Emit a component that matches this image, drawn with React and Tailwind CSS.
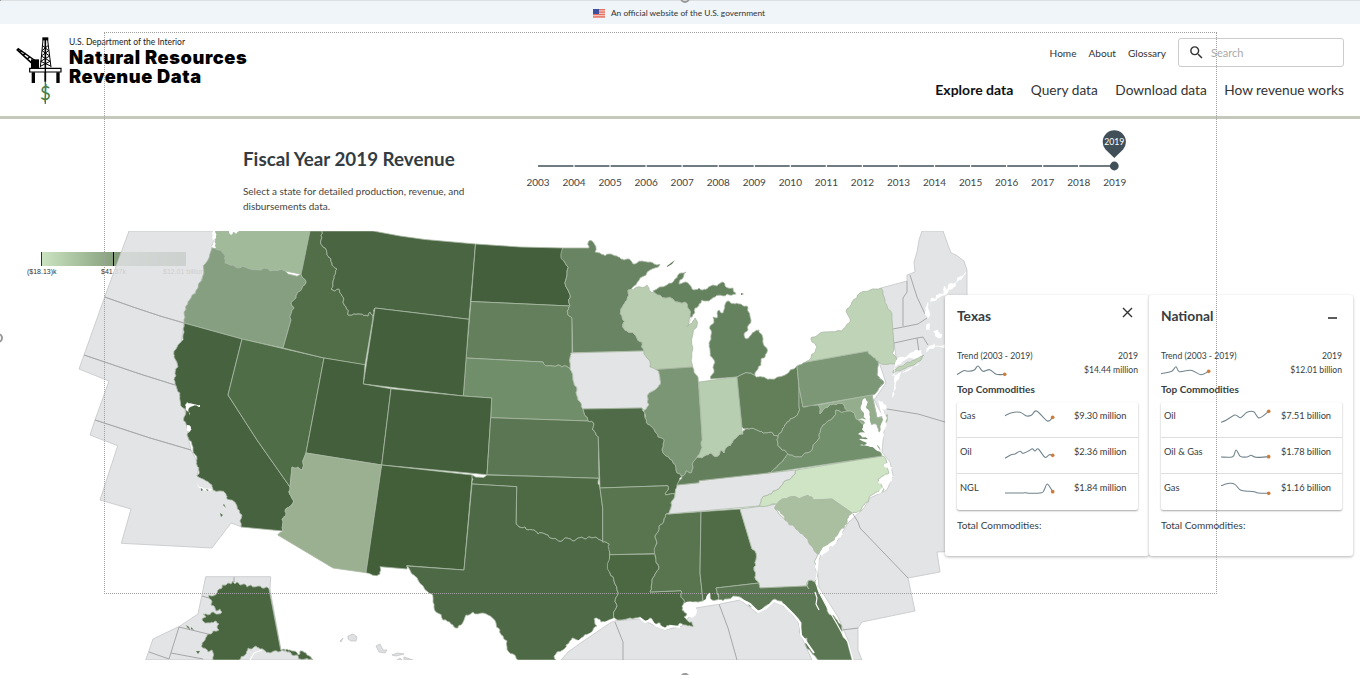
import React from 'react';
import { MdSearch } from 'react-icons/md';

const states = [
  ['#a1ba9a', 'WA', '214,231 310,231 302,270 305,275 285,271 270,271 264,268 250,269 243,266 237,268 233,265 225,263 224,254 219,250 212,248 213,244 216,240 213,237'],
  ['#859f80', 'OR', '212,248 219,250 224,254 225,263 233,265 237,268 243,266 250,269 264,268 270,271 285,271 301,274 306,281 302,288 297,293 296,298 291,303 292,306 294,308 291,320 283,348 242,339 184,323 185,318 184,312 186,306 191,298 198,288 204,273 208,260'],
  ['#47623f', 'CA', '184,323 242,339 228,395 257,440 290,487 291,496 293,503 287,508 286,515 282,519 283,531 241,527 242,515 237,506 232,500 227,499 226,494 213,490 212,485 206,481 197,476 199,471 197,465 197,459 193,450 189,440 187,434 189,430 186,424 184,417 185,409 180,400 180,393 175,384 176,376 178,367 174,357 174,351 180,343 183,335'],
  ['#4f6e47', 'NV', '242,339 324,358 306,453 302,470 298,467 292,467 290,487 257,440 228,395'],
  ['#526e48', 'ID', '310,231 322,231 321,240 323,247 327,255 331,259 332,263 337,269 334,276 333,282 331,289 335,291 339,289 342,296 343,303 346,307 348,315 352,315 360,314 368,316 370,312 373,318 365,365 324,358 283,348 291,320 294,308 292,306 291,303 296,298 297,293 302,288 306,281 301,274 302,270'],
  ['#4a6541', 'MT', '322,231 373,231 400,236 425,239.5 475.5,244 469,319.3 375,308 373,318 370,312 368,316 360,314 352,315 348,315 346,307 343,303 342,296 339,289 335,291 331,289 333,282 334,276 337,269 332,263 331,259 327,255 323,247 321,240'],
  ['#435f3b', 'ND', '475.5,244 520,247 563,248 564,261 567,275 568,290 570,298 570,306 471,301.5'],
  ['#637f5b', 'SD', '471,301.5 570,306 567,311 569,316 572,318 572,353 570,358 570,369 566,366 558,365 547,366 543,362 466,358'],
  ['#718e6b', 'NE', '466,358 543,362 547,366 558,365 566,366 570,369 573,380 577,390 578,400 583,409 588,421 490.7,417.7 491.7,398 463.3,396'],
  ['#435f3b', 'WY', '375,308 469,319.3 463.3,396 363.3,384'],
  ['#435f3b', 'UT', '324,358 365,364.7 363.3,384 391,388.7 381.7,465 306,453'],
  ['#435f3b', 'CO', '391,388.7 463.3,396 491.7,398 490.7,417.7 487,474.7 381.7,465'],
  ['#9ab091', 'AZ', '306,453 381.7,465 366,572.7 333,568 277.7,535 283,531 282,519 286,515 287,508 293,503 291,496 290,487 292,467 298,467 302,470'],
  ['#425f3a', 'NM', '381.7,465 472.3,475 464,570 406.7,565.7 407,569 380,566.7 380,574 366,572.7'],
  ['#5b7652', 'KS', '490.7,417.7 588,421 594,424 592,429 596,435 598.3,437 599,478.3 487,474.7'],
  ['#4e6a45', 'OK', '472.3,475 487,475 599,478.3 600,488 602.7,508 602.7,542 597,538 590,537 585,539 578,538 573,541 567,538 562,541 556,539 550,538 545,534 538,534 534,530 528,530 525,527 519,527 516,524 516.7,486.7 472,484'],
  ['#4d6945', 'TX', '472,484 516.7,486.7 516,524 519,527 525,527 528,530 534,530 538,534 545,534 550,538 556,539 562,541 567,538 573,541 578,538 585,539 590,537 597,538 602.7,542 609.3,544 610,573 614,581 618.3,593 615,602 616.7,607 614,618 605,622 601,622 597,618 594,619 597,626 592,632 583,637 579,641 575,639 572,638 569,643 566,645 563,650 557,652 554,656 556,660 518,660 513,654 507,647 503,636 500,630 496,623 488,615 478,614 473,612 466,615 462,624 458,628 451,624 443,620 436,612 434,607 433,597 428,592 418,580 412,574 407,566 464,570'],
  ['#698462', 'MN', '562.7,248 589,248 589,240.7 593,242 595,252 600,253 605,256 609,254 613,255 617,256 621,259 624,260 627,259 633,264 637,263 642,261 650,262 654,264 660,264.5 650,270 640,278 634,286 628,290 627,300 624,304 620.7,310 622,316 622.7,327 628,332 636,336 642,342 644,351 572.7,352.7 572,318 569,316 567,311 570,306 570,298 568,290 567,275 564,261'],
  ['#b9ceb1', 'WI', '628,290 637,287 647,285 650,291 656,292 660,295 673,299 685,302 688,308 690,317 687,327 693,321 695,318 692.7,335 691.7,353 692.7,367 656,369.5 650,367 646,357 644,351 642,342 636,336 628,332 622.7,327 622,316 620.7,310 624,304 627,300'],
  ['#65825f', 'MI-upper', '653,291 667,285 675,279 678,275 682,273 686,272 680,280 679,284 688,283 692,289 699,288 703,290 708,288 713,285 717,286 723,282 725,286 733,288 736,294 727,294 723,296 715,297 709,301 702,300 699,304 695,308 692,317 690,317 688,308 685,302 673,299 660,295'],
  ['#65825f', 'MI-lower', '725.7,303 729,301 735,304 741,304 748,307 751,320 748,330 744,335 746,339 750,336 754,332 759,330 762,335 766.7,348 765,357 762,358 761,365 758,369 755,375.7 737,377 710.7,379 714,370 714,360 710,350 709,343 711,335 710,326 714,322 713,317 717,318 719,310 723,313'],
  ['#7b9674', 'IL', '656,369.5 692.7,367 698,377 702.3,440 701,450 697,457 693,467 691,473 686,471 682,476 677,473 673,463 666,456 663,453 663,447 664,440 658,437 656,433 650,425 645,418 644,410 649,405 649,393 658,387 660,380'],
  ['#e3e4e6', 'IA', '570.7,353 644,351 646,357 650,367 656,369.5 660,380 658,387 649,393 649,405 644,410 642,408 583,409 578,400 577,390 573,380 570,369 570,358'],
  ['#506b47', 'MO', '583,409 642,408 645,418 650,425 656,433 658,437 664,440 663,447 663,453 666,456 673,463 677,473 682,476 678,487 675,494 665.7,495 668,490 667.7,485.7 600,488 598.3,437 596,435 592,429 594,424 588,421'],
  ['#59754f', 'AR', '600,488 667.7,485.7 668,490 665.7,495 675,494 671,503 671,508 666,514 664,520 659,526 658,532 655,537 656,545 655.7,553.7 609.7,554.7 609.3,544 602.7,542 602.7,508'],
  ['#4b6842', 'LA', '609.7,554.7 655.7,554 656,562 659,567 655,574 652,580 650,592 681,590.7 681,597 684,603 682,610 687,614 684,617 692,622 693,627 688,626 680,623 678,626 670,625 665,628 660,623 653,623 650,618 645,621 640,617 630,618 614,618 616.7,607 615,602 618.3,593 614,581 610,573'],
  ['#597550', 'MS', '668,514 701,511.7 700,573 703,601 693,602 684,603 681,597 681,590.7 650,592 652,580 655,574 659,567 656,562 656,545 655,537 658,532 659,526 664,520 666,514'],
  ['#506c47', 'AL', '701,511.7 740,509 752,549 756,560 754,570 756,580 759,583 716,588 717,593 719,598 712,600 710,593 708,594 708,601 703,601 700,573'],
  ['#e3e4e6', 'GA', '740,509 777,504 775,509 785,520 795,527 800,533 808,539 812,546 818,554 816,570 815,582 807,582 807,586 760,588 759,583 756,580 754,570 756,560 752,549'],
  ['#cee4c5', 'NC', '759,506 761,500 768,495 773,491 780,487 783,483 790,479 795,474 796,470 882,456 887,463 883,466 888,467 889,473 883,476 878,479 880,483 884,489 877,492 870,496 864,505 861,511 852,513 832,499 813,500 808,495.5 790,497 777,504'],
  ['#aabf9f', 'SC', '777,504 790,497 808,495.5 813,500 832,499 852,513 847,519 844,528 838,534 833,542 824,547 820,554 818,554 812,546 808,539 800,533 795,527 785,520 783,515 775,509'],
  ['#e3e4e6', 'TN', '677,485 699,482.7 699,480.7 768,473 796,470 795,474 790,479 783,483 780,487 773,491 768,495 761,500 759,506 668,514 671,508 671,503 675,494'],
  ['#647f5c', 'KY', '677,485 682,476 686,471 691,473 693,467 697,457 703,457 710,453 718,456 721,450 724,453 728,446 732,443 737,437 743,434 743,431 749,429 757,430 763,433 771,432 778,436 778,443 782,450 788,454 783,461 777,467 768,473 699,480.7 699,482.7'],
  ['#b8ceb0', 'IN', '699,382 737,377 742,430 743,434 737,437 732,443 728,446 724,453 721,450 718,456 710,453 703,457 697,457 701,450 702.3,440'],
  ['#627f5a', 'OH', '737,377 755,375.7 762,377 770,379 785,375 797,366 799,387 799,407 795,417 787,422 783,428 778,436 771,432 763,433 757,430 749,429 742,427'],
  ['#67835f', 'WV', '799,387 803,407 818,405 820,414 828,407 833,404 839,403 845,406 848,411 836,410 833,418 828,421 822,427 819,434 817,441 812,450 803,455 796,457 788,454 782,450 778,443 778,436 783,428 787,422 795,417 799,407'],
  ['#72906c', 'VA', '777,467 783,461 788,454 796,457 803,455 812,450 817,441 819,434 822,427 828,421 833,418 836,410 848,411 855,415 860,421 868,426 870,432 873,438 879,447 882,456 768,473'],
  ['#7c9775', 'PA', '797,366 806,362 868,351 872,356 878,361 877,375 880,379 884,383 879,388 872,395 803,407 799,387'],
  ['#94ae8d', 'MD', '818,405 872,395 877,418 887,415 884,427 880,433 877,425 873,424 868,426 860,421 855,415 848,411 845,406 839,403 833,404 828,407 820,414'],
  ['#bfd4b6', 'NY', '806,362 811,358 815,352 817,347 812,342 812,337 820,333 827,332 842,331 849,323 849,317 846,312 852,302 860,293 870,290 881,288 885,300 888,309 892,320 894,345 897,361 895,364 878,361 872,356 868,351'],
  ['#bfd4b6', 'LI', '893,373 897,368 905,364 915,360 924,355 920,361 910,366 900,371'],
  ['#5b7753', 'FL', '716,588 759,583 760,588 807,586 809,589 808,581 815,582 818,590 827,607 836,619 842,633 847,641 852,660 818,660 811,652 805,644 807,638 801,636 801,626 795,615 787,608 783,603 775,599 767,605 761,610 755,609 748,602 740,597 727,599 719,600 717,593'],
  ['#4a6641', 'AK', '269,589 266,587 262,588 258,586 254,587 251,585 247,587 243,584 240,585 237,582 235,584 233,581 231,584 229,583 226,585 222,585 222,588 219,589 217,593 213,596 209,595 212,602 211,605 215,608 216,611 220,609 222,612 218,614 212,612 208,615 203,614 206,617 202,619 204,622 210,623 216,621 219,624 217,627 219,630 213,631 211,634 207,635 205,640 202,643 203,648 206,649 208,652 212,650 213,660 239,660 245,655 248,648 252,649 256,646 260,649 264,650 270,653 274,651 278,652 284,649 287,652 290,652 292,655 296,655 299,659 305,659 313,660 307,655 300,651 300,654 298,655 294,651 290,650 287,649 284,651 280.7,650'],
];

const oceans = [
  '129,231 216,231 213,245 212,250 204,273 198,288 186,306 184,323 160,316 133,307 104.7,297',
  '104.7,297 133,307 160,316 184,323 181,343 174,353 178,367 175,385 140,374 84,355',
  '84,355 140,374 175,385 182,397 186,416 188,437 191,450 150,438 95,420 109,381 79,369',
  '95,420 150,438 191,450 199,465 197,476 214,483 228,494 238,505 243,515 242,527 231,523 212,548 121.3,543.3 131,509 100,500 117.7,445.7 90,435',
  '881,288 907,281 907,275 915,272 914,262 917,252 919,240 922,231 943,231 951,253 956,255 960,258 964,261 967,270 967,295 960,551 937,552 940,572 908,578 915,611 862,622 858,628 858,650 862,660 853,660 848,640 838,617 819,587 817,565 822,552 836,543 848,523 864,508 870,498 887,490 893,475 890,462 882,452 885,420 874,400 886,383 879,362 897,363 894,343',
  '561,660 568,652 585,640 613,621 640,619 665,630 682,626 696,608 720,604 740,600 757,613 775,602 787,608 798,622 802,638 812,660',
  '205.7,576.7 270.7,576.7 270,589 281,650 313,660 145.7,660 153,639 180,626 198,614',
];

const oceanLines = [
  '907,281 907,292 903,298 903,326', '910,275 917,297 925,314', '893,329 918,324 927,318',
  '894,343 917,338 923,337 928,345', '917,338 919,352', '887,409 918,414 945,422',
  '853,514 858,522 860,528 908,578', '842,630 858,628', '615,622 623,642 623,660', '719,604 728,628 737,660',
  '234,577 234,582', '202,596 209,598', '208,634 179,627 169,659 149,652', '171,653 203,659', '878,361 877,375 884,383 872,395 877,418 888,415',
];

const water = [
  '213,231 215,231 216,238 213,240 216,248 211,247 213,240',
  '229,231 239,231 236,234 233,232 231,235',
  '187,402 193,404 200,405 200,407 193,406 189,408 190,415 187,411 185,405',
  '187,425 191,427 190,432 187,431',
  '197,484 202,487 213,490 207,491 199,488',
  '865,398 868,402 866,408 870,417 870,421 875,427 879,432 880,438 877,444 881,451 876,450 868,446 860,445 867,443 859,439 868,439 858,434 867,434 862,429 865,423 858,420 866,420 864,413 861,406',
  '878,400 886,405 886,409 882,409 887,418 883,432 880,443 879,433 883,420',
  '895,363 898,358 910,353 922,350 922,355 905,360 896,366 892,376 908,371 920,363 901,373 894,383',
  '896,379 894,389 892,398 896,388',
  '926,326 930,323 930,330 926,330', '933,331 938,330 942,334 941,338 936,337', '929,346 934,343 935,346 945,344 945,348 933,349 926,352',
  '930,302 931,298 935,299 936,295 943,294 944,286 947,290 951,283 955,283 957,278 962,276 966,271 963,277 958,281 955,287 949,290 946,295 940,297 935,301',
  '925,308 928,302 929,310 928,319 925,314',
  '887,463 892,467 893,476 889,484 881,493 876,493 884,486 878,482 885,479 890,473 888,468 883,466',
  '819,554 823,547 828,545 829,550 822,556', '817,562 819,558 817,578 815,580',
  '829,547 836,539 842,531 841,537 834,545',
  '684,604 697,603 697,610 692,618 687,615 690,611 683,609', '708,594 710,593 711,601 722,600 720,604 703,604',
];

const specks = ['201,488 203,490 201,491', '206,489 209,490 207,491', '224,504 226,508 223,505', '220,513 223,515 221,517', '186,625 189,627 190,630 187,627', '191,627 194,630 191,629', '196,651 200,651 198,654', '695,310 690,321 688,326', '667,266 675,260 672,264 667,267', '741,293 744,294 741,295', '834,618 838,621 836,623'];
const hawaii = ['340,641 343,638 341,642', '348,636 353,634 357,637 356,641 351,641 348,639', '376,646 380,644 383,650 387,650 385,653 379,652', '392,655 397,653 404,654 396,656', '397,660 400,658 402,660', '404,657 413,660 404,660'];

// Bends one short edge; both neighbours of a shared border get the same bend
// because the offset is derived from the endpoints in a fixed order.
function bend(a, b, depth) {
  const len = Math.hypot(b[0] - a[0], b[1] - a[1]);
  if (depth === 0 || len < 2.5 || len > 19) return [b];
  const swap = a[0] > b[0] || (a[0] === b[0] && a[1] > b[1]);
  const [p, q] = swap ? [b, a] : [a, b];
  const s = Math.sin(p[0] * 12.9 + p[1] * 78.2 + q[0] * 37.7 + q[1] * 9.1) * 4375.5;
  const k = (s - Math.floor(s) - 0.5) * 0.42;
  const m = [(p[0] + q[0]) / 2 - (q[1] - p[1]) * k, (p[1] + q[1]) / 2 + (q[0] - p[0]) * k];
  return [...bend(a, m, depth - 1), ...bend(m, b, depth - 1)];
}

function natural(points) {
  const pts = points.split(' ').map((p) => p.split(',').map(Number));
  return pts
    .flatMap((p, i) => {
      const q = pts[(i + 1) % pts.length];
      const straight = (p[1] === 231 && q[1] === 231) || (p[1] === 660 && q[1] === 660);
      return straight ? [q] : bend(p, q, 2);
    })
    .map(([x, y]) => `${x.toFixed(1)},${y.toFixed(1)}`)
    .join(' ');
}

function smooth(pts) {
  let d = `M${pts[0][0]} ${pts[0][1]}`;
  for (let i = 0; i < pts.length - 1; i++) {
    const p0 = pts[Math.max(i - 1, 0)], p1 = pts[i], p2 = pts[i + 1], p3 = pts[Math.min(i + 2, pts.length - 1)];
    d += `C${p1[0] + (p2[0] - p0[0]) / 6} ${p1[1] + (p2[1] - p0[1]) / 6} ${p2[0] - (p3[0] - p1[0]) / 6} ${p2[1] - (p3[1] - p1[1]) / 6} ${p2[0]} ${p2[1]}`;
  }
  return d;
}

function Spark({ pts }) {
  const last = pts[pts.length - 1];
  return (
    <svg className="block h-[14px] w-[51px] overflow-visible" viewBox="0 0 153 42">
      <path d={smooth(pts)} fill="none" stroke="#71838c" strokeWidth="3.2" />
      <circle cx={last[0]} cy={last[1]} r="5.5" fill="#cf7b3a" />
    </svg>
  );
}

const cards = [
  {
    name: 'Texas', total: '$14.44 million',
    trend: [[0, 32], [20, 20], [35, 22], [52, 18], [63, 6], [78, 22], [98, 17], [118, 31], [143, 31]],
    rows: [
      ['Gas', '$9.30 million', [[0, 20], [20, 11], [45, 10], [65, 21], [80, 18], [95, 6], [127, 36], [143, 25]]],
      ['Oil', '$2.36 million', [[0, 40], [18, 29], [30, 27], [45, 19], [55, 25], [72, 17], [82, 11], [90, 18], [100, 12], [120, 37], [133, 29], [143, 31]]],
      ['NGL', '$1.84 million', [[0, 36], [50, 36], [62, 35], [75, 37], [110, 35], [118, 26], [127, 9], [143, 32]]],
    ],
  },
  {
    name: 'National', total: '$12.01 billion',
    trend: [[0, 29], [32, 22], [45, 8], [55, 23], [90, 19], [120, 32], [143, 22]],
    rows: [
      ['Oil', '$7.51 billion', [[0, 40], [15, 34], [42, 18], [58, 26], [78, 10], [98, 8], [115, 27], [143, 7]]],
      ['Oil & Gas', '$1.78 billion', [[0, 36], [35, 35], [45, 15], [58, 34], [78, 36], [90, 31], [105, 37], [143, 35]]],
      ['Gas', '$1.16 billion', [[0, 14], [25, 7], [42, 10], [58, 27], [85, 31], [100, 32], [112, 36], [143, 37]]],
    ],
  },
];

function Card({ card, national }) {
  return (
    <section className="h-[261px] w-[204px] rounded-[3px] bg-white px-[12px] text-[#373d42] shadow-[0_1px_3px_rgba(0,0,0,0.3)]">
      <div className="flex h-[54px] justify-between pt-[11px]">
        <h3 className="text-[13.8px] leading-[20px] font-bold">{card.name}</h3>
        {national ? (
          <svg className="mt-[11px] mr-[4px] h-[3px] w-[9px]" viewBox="0 0 9 3"><path d="M0 1h9" stroke="#333" strokeWidth="1.6" /></svg>
        ) : (
          <svg className="mt-[1px] mr-[4px] h-[11px] w-[11px]" viewBox="0 0 11 11"><path d="M1 1l9 9M10 1l-9 9" stroke="#333" strokeWidth="1.4" /></svg>
        )}
      </div>
      <div className="-mr-px flex justify-between text-[8.6px] leading-[13px]">
        <div>
          <div className="pt-px">Trend (2003 - 2019)</div>
          <div className="pt-px"><Spark pts={card.trend} /></div>
        </div>
        <div className="pt-px text-right">
          <div>2019</div>
          <div className="pt-px">{card.total}</div>
        </div>
      </div>
      <h4 className="mt-[4px] text-[10px] leading-[14px] font-bold">Top Commodities</h4>
      <div className="mt-[6px] w-[181px] rounded-[2px] shadow-[0_1px_2px_rgba(0,0,0,0.35)]">
        {card.rows.map(([label, value, pts], i) => (
          <div key={label} className={`flex h-[36px] pl-[3px] text-[9.3px] leading-[14px] ${i < 2 ? 'border-b border-[#dedede]' : ''}`}>
            <div className={national ? 'w-[57px] pt-[7px]' : 'w-[45px] pt-[7px]'}>{label}</div>
            <div className={national ? 'w-[60px] pt-[7px]' : 'w-[69px] pt-[7px]'}><Spark pts={pts} /></div>
            <div className="pt-[7px] tracking-[-0.05px] whitespace-nowrap">{value}</div>
          </div>
        ))}
      </div>
      <div className="mt-[8px] text-[10px] leading-[14px]">Total Commodities:</div>
    </section>
  );
}

function RigLogo() {
  return (
    <svg className="h-[70px] w-[48px] shrink-0" viewBox="45 105 144 210">
      <path d="M127 112h18v9h-18z" />
      <path d="M129 120L121 202M143 120l10 82M128 137l18 15-22 16 26 16-27 14M144 137l-18 15 23 16-27 16 30 14" fill="none" stroke="#000" strokeWidth="3" />
      <path d="M136 120v125" stroke="#000" strokeWidth="5" />
      <path d="M50 148l46 42M53 145l54 38M58 155l8-2M70 165l8-5M82 177l8-7" stroke="#000" strokeWidth="4.5" />
      <path d="M93 178h24v27H93z" />
      <path d="M89 205h94v11H89z" fill="#fff" stroke="#000" strokeWidth="3.5" />
      <path d="M95 217h10v32H95zM169 217h10v32h-10z" />
      <path d="M136 205v40" stroke="#000" strokeWidth="4" />
      <path d="M136 245v67" stroke="#4c7d45" strokeWidth="4" />
      <text x="136" y="299" textAnchor="middle" fontFamily="Lato, sans-serif" fontSize="56" fill="#4c7d45">$</text>
    </svg>
  );
}

function RevenueMap() {
  return (
    <svg className="relative block h-[429px] w-[1360px]" viewBox="0 231 1360 429">
      <g fill="#dfe0e2" fillOpacity="0.88" stroke="#c3c5c7" strokeWidth="0.8">
        {oceans.map((p) => <polygon key={p} points={p} />)}
      </g>
      <g fill="none" stroke="#a5a7a9" strokeWidth="1">
        <path d="M104.7 297L133 307L160 316L184 323M84 355L140 374L175 385M95 420L150 438L191 450" />
        {oceanLines.map((p) => <polyline key={p} points={p} />)}
      </g>
      <g stroke="#a9b9a4" strokeWidth="0.8" strokeLinejoin="round">
        {states.map(([fill, id, p]) => <polygon key={id} points={natural(p)} fill={fill} />)}
      </g>
      <g fill="#fff">{water.map((p) => <polygon key={p} points={natural(p)} />)}</g>
      <g fill="#5b7753">{specks.map((p) => <polygon key={p} points={p} />)}</g>
      <g fill="#dfe0e2" stroke="#c3c5c7" strokeWidth="0.8">{hawaii.map((p) => <polygon key={p} points={p} />)}</g>
      <g fill="none" stroke="#fff" strokeWidth="2" strokeLinejoin="round">
        <path d="M615 619l-10 4-13 10-13 8-9 4-7 7-6 8M640 618l5 4 6-2 4 5 10 4 6-3 9 1M740 599l10 5 8 8 8-4 8-7 10 4 10 10 6 8 1 12 6 8 7 10" />
        <path d="M816 583l3 9 8 15 10 17 6 11 5 7 5 18" strokeWidth="1.2" />
        <path d="M815 592l2 6-1 6 3 6M254 653l-4 7M254 653l8-3" strokeWidth="1.2" />
      </g>
    </svg>
  );
}

const years = Array.from({ length: 17 }, (_, i) => 2003 + i);

export default function App() {
  return (
    <div className="relative flex h-[675px] w-[1360px] flex-col overflow-hidden bg-white font-['Lato',sans-serif]">
      <div className="flex h-[24px] shrink-0 items-center justify-center border-t border-[#dcdfe1] bg-[#f0f5f9] pt-px pr-[2px] text-[8.4px] text-[#333]">
        <svg className="mr-[6px] h-[9px] w-[12px]" viewBox="0 0 12 9">
          <path d="M0 0h12v9H0z" fill="#f3c3bb" />
          <path d="M0 .7h12M0 3.1h12M0 5.5h12M0 7.9h12" stroke="#e4705f" strokeWidth="1.2" />
          <path d="M0 0h6v5H0z" fill="#3c4fa0" />
        </svg>
        <span>An official website of the U.S. government</span>
      </div>

      <header className="flex h-[95px] shrink-0 justify-between border-b-[3px] border-[#c3cabb] pr-[16px] pl-[15px]">
        <div className="flex pt-[11px]">
          <RigLogo />
          <div className="ml-[6px] whitespace-nowrap text-black">
            <div className="pt-[1px] text-[8.5px] leading-[12px] text-[#222]">U.S. Department of the Interior</div>
            <div className="font-['Inter',sans-serif] text-[18.3px] leading-[19px] font-black tracking-[0.55px]">
              <div>Natural Resources</div>
              <div>Revenue Data</div>
            </div>
          </div>
        </div>
        <div className="flex flex-col items-end pt-[14px] text-[#333]">
          <div className="flex items-center text-[10.1px]">
            <nav className="flex gap-[12px] pt-[3px]"><a>Home</a><a>About</a><a>Glossary</a></nav>
            <div className="ml-[12px] flex h-[29px] w-[166px] items-center rounded-[3px] border border-[#ccc] pl-[9px] text-[11px] text-[#aaa]">
              <MdSearch className="mr-[6px] h-[17px] w-[17px] text-[#333]" /><span className="pt-[2px]">Search</span>
            </div>
          </div>
          <nav className="mt-[14px] flex gap-[17.5px] text-[13.7px] leading-[18px]">
            <a className="text-[14px] font-bold text-[#111]">Explore data</a><a>Query data</a><a>Download data</a><a>How revenue works</a>
          </nav>
        </div>
      </header>

      <div className="flex h-[112px] shrink-0 pl-[243px]">
        <div className="w-[277px] pt-[27px] text-[#333c42]">
          <h1 className="text-[18.8px] leading-[26px] font-bold">Fiscal Year 2019 Revenue</h1>
          <p className="mt-[12px] w-[240px] text-[9.95px] leading-[15px] text-[#444]">Select a state for detailed production, revenue, and disbursements data.</p>
        </div>
        <div className="w-[614px] pt-[11px]">
          <svg className="block h-[42px] w-[612px]" viewBox="520 130 612 42">
            <path d="M538 166h577" stroke="#414f58" strokeWidth="1.7" />
            {years.slice(1, 16).map((y, i) => <path key={y} d={`M${574 + i * 36.05} 164.500v3`} stroke="#fff" strokeWidth="1.2" />)}
            <path d="M1114.300 158L1105.500 149.500A11.600 11.600 0 1 1 1123.100 149.500Z" fill="#414f58" />
            <circle cx="1114.300" cy="166" r="4.400" fill="#414f58" />
            <text x="1114.300" y="145" textAnchor="middle" fontSize="8.700" fill="#fff">2019</text>
          </svg>
          <div className="flex pt-[3px] text-center text-[10px] leading-[14px] text-[#444]">
            {years.map((y) => <span key={y} className="w-[36.050px]">{y}</span>)}
          </div>
        </div>
      </div>

      <main className="relative h-[429px] shrink-0">
        <div className="absolute top-[21px] left-[27px] w-[180px]">
          <div className="ml-[14px] flex h-[14px] w-[145px] border-l border-[#333] bg-linear-to-r from-[#cbe3c1] to-[#47623f]">
            <div className="ml-[71px] w-px bg-black" />
          </div>
          <div className="flex h-[10px] font-['Liberation_Sans',sans-serif] text-[7px] leading-[11px] text-[#333]">
            <span className="w-[74px]">($18.13)k</span><span className="w-[62px]">$41.37k</span><span className="whitespace-nowrap">$12.01 billion</span>
          </div>
        </div>
        <RevenueMap />
        <div className="absolute top-[64px] left-[945px] flex">
          <Card card={cards[0]} />
          <Card card={cards[1]} national />
        </div>
      </main>

      <div className="pointer-events-none absolute top-[32px] left-[104px] h-[562px] w-[1113px] border border-dotted border-[#a0a0a0]" />
      <div className="absolute top-[-7px] left-[680px] h-[10px] w-[10px] rounded-full border-2 border-[#999]" />
      <div className="absolute top-[673px] left-[680px] h-[10px] w-[10px] rounded-full border-2 border-[#999]" />
      <div className="absolute top-[333px] left-[-7px] h-[10px] w-[10px] rounded-full border-2 border-[#999]" />
      <div className="absolute top-[-7px] left-[-7px] h-[9px] w-[9px] rounded-full border-2 border-[#888]" />
    </div>
  );
}
